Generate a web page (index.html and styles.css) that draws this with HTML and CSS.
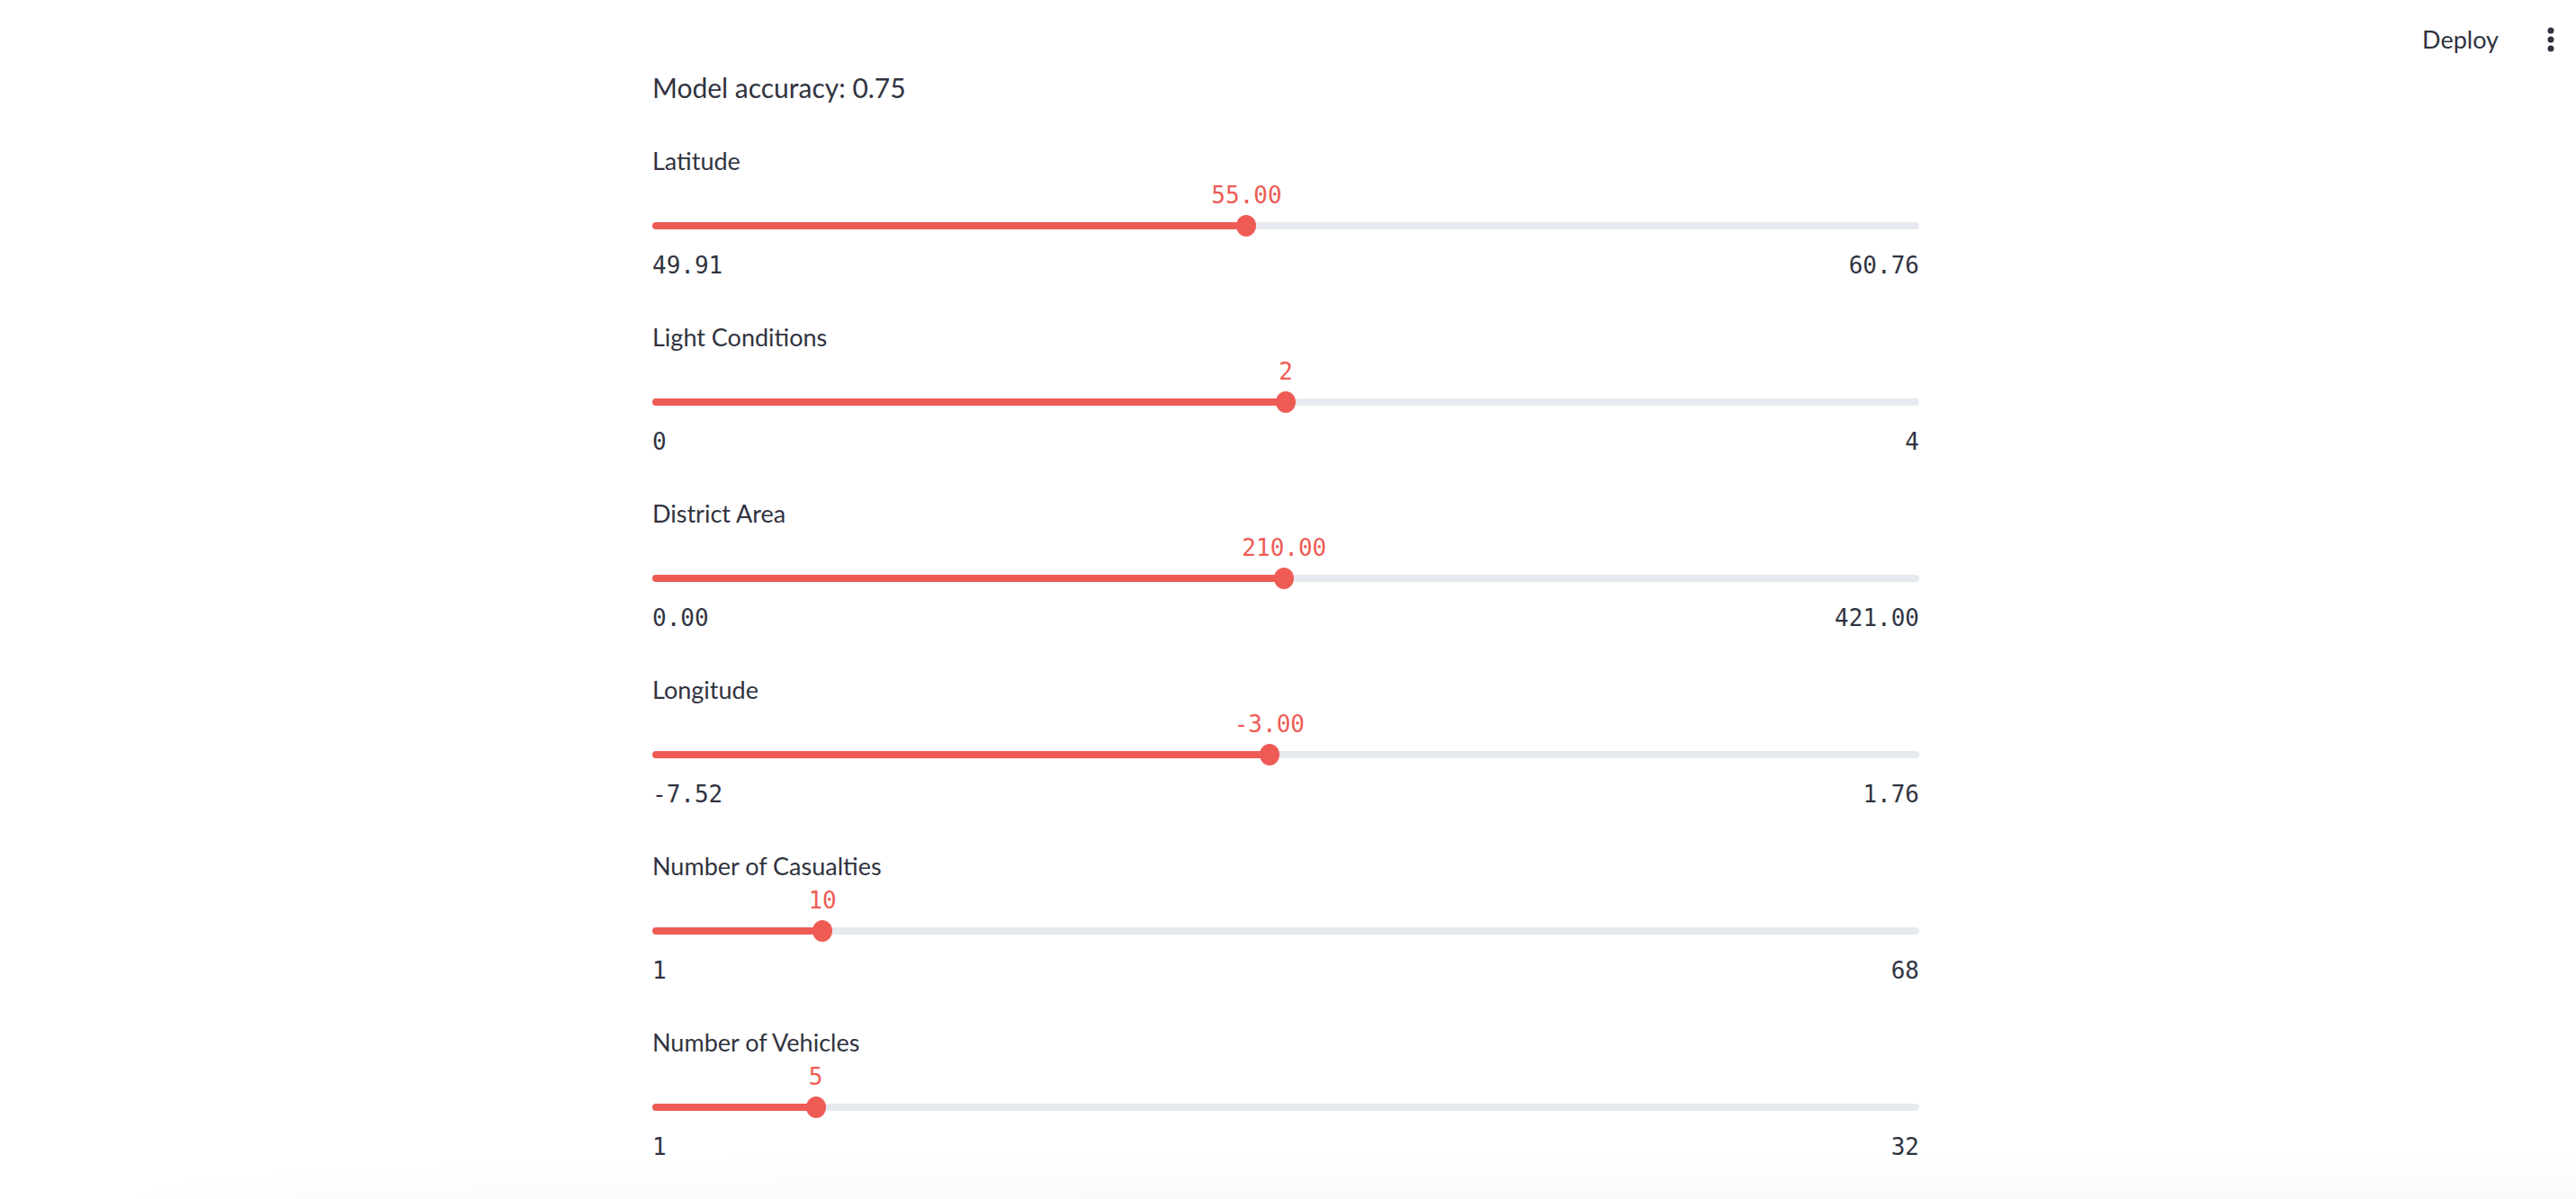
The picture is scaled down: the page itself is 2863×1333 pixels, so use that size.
FILE: index.html
```html
<!DOCTYPE html>
<html lang="en">
<head>
<meta charset="utf-8">
<title>Streamlit</title>
<link rel="stylesheet" href="styles.css">
</head>
<body>
<header class="header">
  <button class="deploy">Deploy</button>
  <button class="kebab" aria-label="Main menu">
    <svg width="8" height="28" viewBox="0 0 8 28"><circle cx="4" cy="4" r="3.5"/><circle cx="4" cy="14" r="3.5"/><circle cx="4" cy="24" r="3.5"/></svg>
  </button>
</header>
<main class="main">
  <div class="block">
    <p class="accuracy">Model accuracy: 0.75</p>

    <div class="slider">
      <div class="label">Latitude</div>
      <div class="area"><div class="track"><div class="fill" style="width:46.91%"></div><div class="value" style="left:46.91%">55.00</div><div class="thumb" style="left:46.91%"></div></div></div>
      <div class="ticks"><span>49.91</span><span>60.76</span></div>
    </div>

    <div class="slider">
      <div class="label">Light Conditions</div>
      <div class="area"><div class="track"><div class="fill" style="width:50%"></div><div class="value" style="left:50%">2</div><div class="thumb" style="left:50%"></div></div></div>
      <div class="ticks"><span>0</span><span>4</span></div>
    </div>

    <div class="slider">
      <div class="label">District Area</div>
      <div class="area"><div class="track"><div class="fill" style="width:49.88%"></div><div class="value" style="left:49.88%">210.00</div><div class="thumb" style="left:49.88%"></div></div></div>
      <div class="ticks"><span>0.00</span><span>421.00</span></div>
    </div>

    <div class="slider">
      <div class="label">Longitude</div>
      <div class="area"><div class="track"><div class="fill" style="width:48.71%"></div><div class="value" style="left:48.71%">-3.00</div><div class="thumb" style="left:48.71%"></div></div></div>
      <div class="ticks"><span>-7.52</span><span>1.76</span></div>
    </div>

    <div class="slider">
      <div class="label">Number of Casualties</div>
      <div class="area"><div class="track"><div class="fill" style="width:13.43%"></div><div class="value" style="left:13.43%">10</div><div class="thumb" style="left:13.43%"></div></div></div>
      <div class="ticks"><span>1</span><span>68</span></div>
    </div>

    <div class="slider">
      <div class="label">Number of Vehicles</div>
      <div class="area"><div class="track"><div class="fill" style="width:12.9%"></div><div class="value" style="left:12.9%">5</div><div class="thumb" style="left:12.9%"></div></div></div>
      <div class="ticks"><span>1</span><span>32</span></div>
    </div>
  </div>
</main>
<div class="bottom-shade"></div>
</body>
</html>
```

FILE: styles.css
```css
* { box-sizing: border-box; }
html, body { margin: 0; padding: 0; background: #ffffff; }
body {
  font-family: "Lato", "Noto Sans", "Liberation Sans", sans-serif;
  color: #31333f;
  overflow: hidden;
  height: 1333px;
}

.header {
  display: flex;
  justify-content: flex-end;
  align-items: center;
  height: 64px;
  padding: 24px 18px 0 0;
}
.deploy {
  font-family: inherit;
  font-size: 27px;
  color: #31333f;
  background: none;
  border: none;
  padding: 0 16px;
  height: 40px;
  line-height: 40px;
  margin-right: 32px;
}
.kebab {
  background: none;
  border: none;
  padding: 0;
  width: 20px;
  height: 40px;
  display: flex;
  align-items: center;
  justify-content: center;
}
.kebab svg { fill: #31333f; display: block; }

.main {
  padding: 8px 5px 0 0;
}
.block {
  width: 1408px;
  margin: 0 auto;
}
.accuracy {
  margin: 0 0 33px 0;
  font-size: 30px;
  line-height: 51px;
}

.slider { padding-bottom: 37px; }
.label {
  font-size: 27px;
  line-height: 45px;
}
.area {
  padding: 46px 0 20px 0;
}
.track {
  position: relative;
  height: 8px;
  border-radius: 4px;
  background: #e6e9ef;
}
.fill {
  height: 8px;
  border-radius: 4px 0 0 4px;
  background: #ee5b55;
}
.thumb {
  position: absolute;
  top: 50%;
  width: 22px;
  height: 24px;
  border-radius: 50%;
  background: #ee5b55;
  transform: translate(-50%, -50%);
}
.value {
  position: absolute;
  bottom: 24px;
  transform: translateX(-50%);
  font-family: "DejaVu Sans Mono", "Liberation Mono", monospace;
  font-size: 26px;
  line-height: 28px;
  color: #ee5b55;
  white-space: nowrap;
}
.ticks {
  display: flex;
  justify-content: space-between;
  font-family: "DejaVu Sans Mono", "Liberation Mono", monospace;
  font-size: 26px;
  line-height: 40px;
  color: #31333f;
}

.bottom-shade {
  position: fixed;
  left: 160px;
  right: -80px;
  bottom: -70px;
  height: 70px;
  border-radius: 50% 0 0 0;
  box-shadow: 0 0 70px 10px rgba(0, 0, 0, 0.035);
}
```
